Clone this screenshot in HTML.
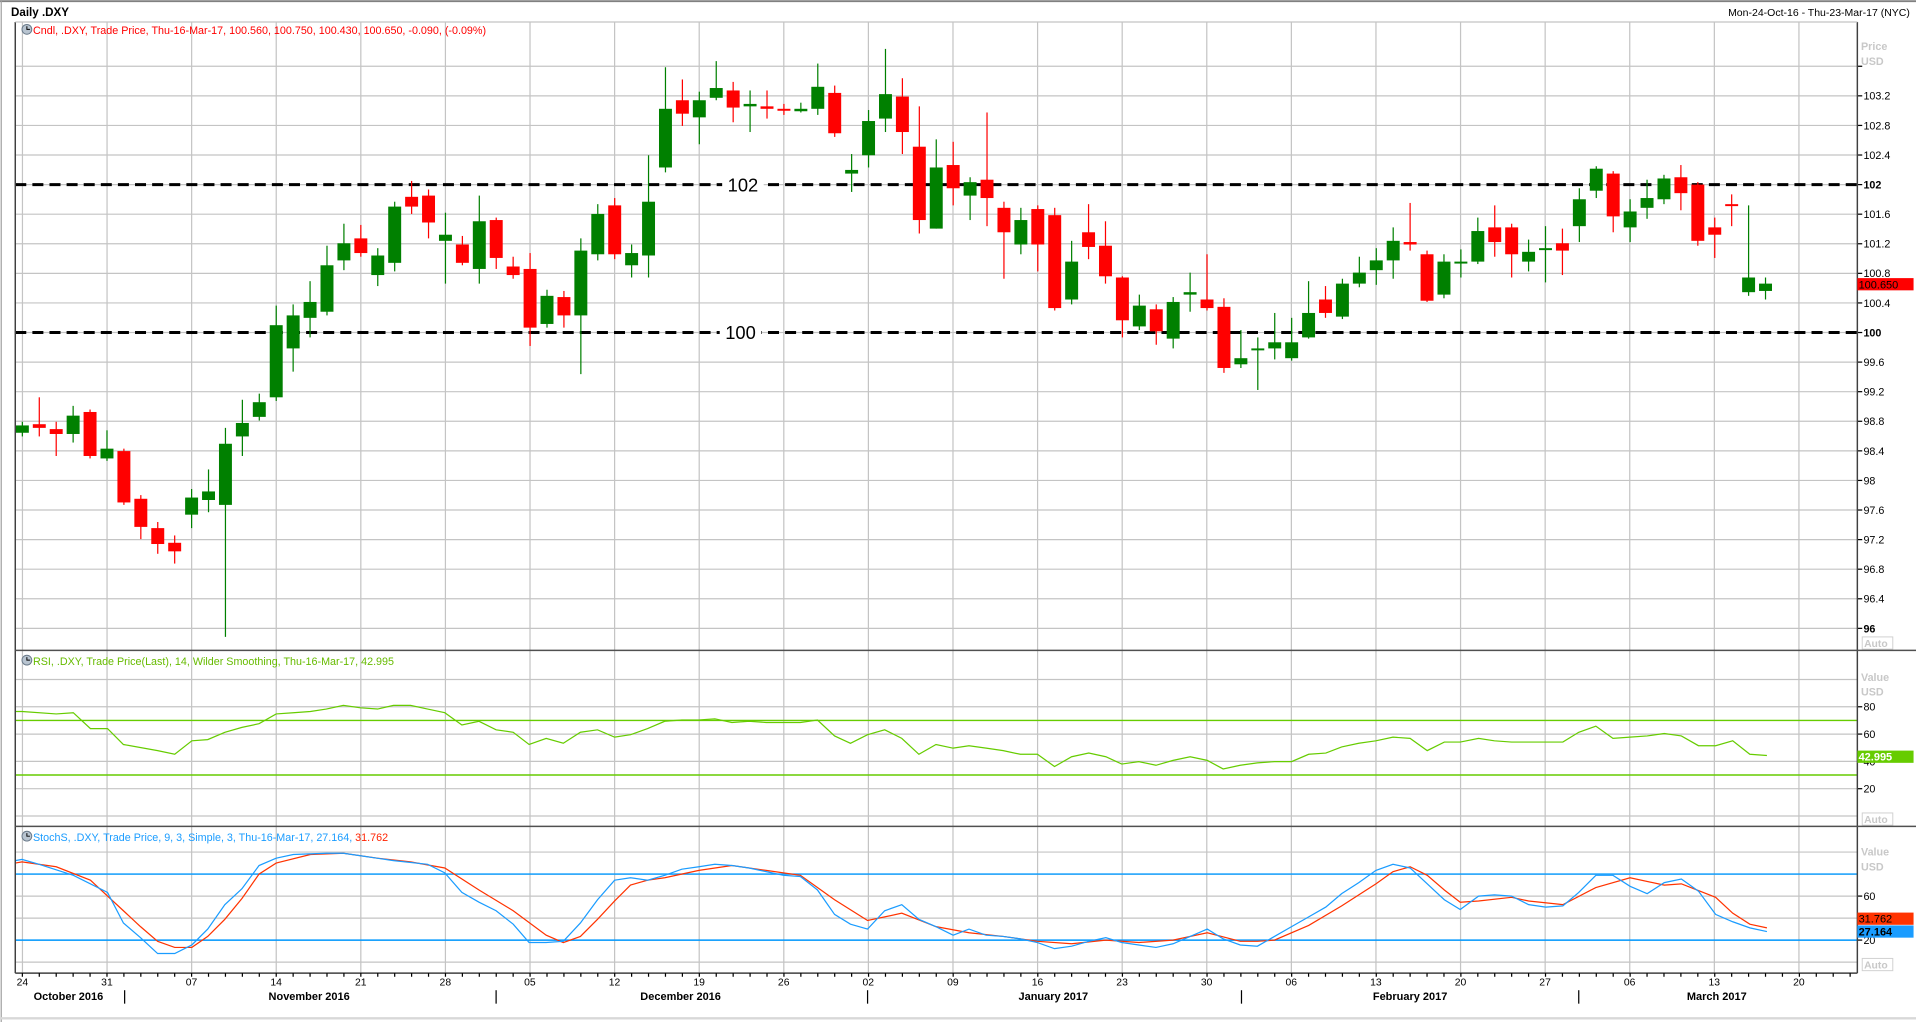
<!DOCTYPE html>
<html><head><meta charset="utf-8"><style>
html,body{margin:0;padding:0;background:#fff;overflow:hidden}
svg{display:block}
text{font-family:"Liberation Sans","DejaVu Sans",sans-serif}
</style></head><body>
<svg id="s" xmlns="http://www.w3.org/2000/svg" width="1916" height="1022" viewBox="0 0 1568 836" preserveAspectRatio="none">
<rect x="0" y="0" width="1568" height="836" fill="#fff"/>
<line x1="0" y1="1" x2="1568" y2="1" stroke="#808080" stroke-width="1.5"/>
<line x1="1" y1="0" x2="1" y2="836" stroke="#a0a0a0"/>
<line x1="0" y1="833" x2="1568" y2="833" stroke="#d8d8d8" stroke-width="2"/>
<text x="9" y="13" font-size="9.5" font-weight="bold" fill="#000">Daily .DXY</text>
<text x="1563" y="13" font-size="8.6" fill="#000" text-anchor="end">Mon-24-Oct-16 - Thu-23-Mar-17 (NYC)</text>
<g id="grid"></g>
<g id="plot"></g>
<g id="frame"></g>
</svg>
<script>
const NS="http://www.w3.org/2000/svg";
function el(p,t,a,txt){const e=document.createElementNS(NS,t);for(const k in a)e.setAttribute(k,a[k]);if(txt!==undefined)e.textContent=txt;p.appendChild(e);return e;}
const G=document.getElementById('grid'),P=document.getElementById('plot'),F=document.getElementById('frame');
const L=12.5,R=1520;
// vertical grid
for(let k=-1;k<=20;k++){const x=87.6+69.23*k;if(x<L||x>R)continue;el(G,'line',{x1:x,y1:18,x2:x,y2:796,stroke:'#c4c4c4','stroke-width':1});}
// price grid
const yp=p=>272-(p-100)*60.5;
for(let p=96;p<=103.61;p+=0.4){const y=yp(p);el(G,'line',{x1:L,y1:y,x2:R,y2:y,stroke:'#c4c4c4'});
 el(F,'line',{x1:R,y1:y,x2:R+4,y2:y,stroke:'#000'});
 const lab=(Math.abs(p-Math.round(p))<0.01)?String(Math.round(p)):p.toFixed(1);
 if(p<103.5) el(F,'text',{x:R+5,y:y+3.2,'font-size':8.8,fill:'#000','font-weight':(lab==='102'||lab==='100'||lab==='96')?'bold':'normal'},lab);}
el(F,'text',{x:1523,y:41,'font-size':8.8,fill:'#c8c8c8','font-weight':'bold'},'Price');
el(F,'text',{x:1523,y:53,'font-size':8.8,fill:'#c8c8c8','font-weight':'bold'},'USD');
// RSI grid
const yr=v=>667.5-1.117*v;
[0,20,40,60,80,100].forEach(v=>{const y=yr(v);el(G,'line',{x1:L,y1:y,x2:R,y2:y,stroke:'#c4c4c4'});if(v>0&&v<100){el(F,'line',{x1:R,y1:y,x2:R+4,y2:y,stroke:'#000'});el(F,'text',{x:R+5,y:y+3.2,'font-size':8.8,fill:'#000'},String(v));}});
el(F,'text',{x:1523,y:557,'font-size':8.8,fill:'#c8c8c8','font-weight':'bold'},'Value');
el(F,'text',{x:1523,y:569,'font-size':8.8,fill:'#c8c8c8','font-weight':'bold'},'USD');
// Stoch grid
const ys=v=>787-0.9*v;
[0,20,40,60,80,100].forEach(v=>{const y=ys(v);el(G,'line',{x1:L,y1:y,x2:R,y2:y,stroke:'#c4c4c4'});if(v===20||v===60){el(F,'line',{x1:R,y1:y,x2:R+4,y2:y,stroke:'#000'});el(F,'text',{x:R+5,y:y+3.2,'font-size':8.8,fill:'#000'},String(v));}});
el(F,'text',{x:1523,y:700,'font-size':8.8,fill:'#c8c8c8','font-weight':'bold'},'Value');
el(F,'text',{x:1523,y:712,'font-size':8.8,fill:'#c8c8c8','font-weight':'bold'},'USD');
// Auto boxes
[[522],[666],[785]].forEach(a=>{el(F,'rect',{x:1524,y:a[0]-1,width:25,height:10,fill:'#fff',stroke:'#d0d0d0','stroke-width':0.8});el(F,'text',{x:1525.5,y:a[0]+7.3,'font-size':8.5,fill:'#c8c8c8','font-weight':'bold'},'Auto');});
// dashed levels
[[102,'102',608],[100,'100',606]].forEach(d=>{const y=yp(d[0]);el(P,'line',{x1:L,y1:y,x2:R,y2:y,stroke:'#000','stroke-width':2.4,'stroke-dasharray':'9 5'});
 el(P,'rect',{x:d[2]-17,y:y-8,width:34,height:16,fill:'#fff'});el(P,'text',{x:d[2],y:y+5.5,'font-size':15,fill:'#000','text-anchor':'middle'},d[1]);});
// candles [bodyTop,bodyBot,wickTop,wickBot,color]
const C=[[348,354,345,357,'g'],[347,350,325,357,'r'],[351,355,345,373,'r'],[340,355,332,362,'g'],[337,373,335,375,'r'],[367,375,352,377,'g'],[369,411,367,413,'r'],[408,431,405,441,'r'],[432,445,427,453,'r'],[444,451,438,461,'r'],
[407,421,400,432,'g'],[402,409,384,419,'g'],[363,413,350,521,'g'],[346,357,327,373,'g'],[329,341,322,344,'g'],[266,325,250,328,'g'],[258,285,249,304,'g'],[247,260,230,276,'g'],[217,255,201,258,'g'],[199,213,183,221,'g'],
[195,207,184,210,'r'],[209,225,203,234,'g'],[169,215,165,222,'g'],[161,169,148,175,'r'],[160,182,155,195,'r'],[192,197,174,232,'g'],[200,215,193,217,'r'],[181,220,160,232,'g'],[180,211,178,220,'r'],[218,225,210,228,'r'],
[220,268,207,283,'r'],[242,265,237,268,'g'],[243,258,238,268,'r'],[205,258,195,306,'g'],[175,208,167,213,'g'],[168,208,162,212,'r'],[207,217,200,227,'g'],[165,209,127,227,'g'],[89,137,55,141,'g'],[82,93,65,103,'r'],
[82,96,75,118,'g'],[72,80,50,82,'g'],[74,88,67,100,'r'],[85,87,74,108,'g'],[87,89,74,97,'r'],[89,90,85,94,'r'],[89,91,84,92,'g'],[71,89,52,94,'g'],[76,109,70,112,'r'],[139,142,126,157,'g'],
[99,127,90,137,'g'],[77,97,40,108,'g'],[79,108,64,126,'r'],[120,180,87,191,'r'],[137,187,114,187,'g'],[135,154,116,168,'r'],[149,160,145,180,'g'],[147,162,92,185,'r'],[170,190,165,228,'r'],[180,200,170,208,'g'],
[171,200,168,222,'r'],[176,252,170,254,'r'],[214,245,197,249,'g'],[190,202,167,212,'r'],[201,226,181,232,'r'],[227,262,226,276,'r'],[250,267,241,270,'g'],[253,271,249,282,'r'],[247,277,243,285,'g'],[239,241,223,255,'g'],
[245,252,208,254,'r'],[251,301,244,305,'r'],[293,298,270,301,'g'],[285,286,276,319,'g'],[280,285,256,294,'g'],[280,293,260,295,'g'],[256,276,230,277,'g'],[245,256,234,260,'r'],[232,259,228,261,'g'],[223,232,210,235,'g'],
[213,221,203,233,'g'],[197,213,186,228,'g'],[198,200,166,205,'r'],[208,246,205,247,'r'],[214,241,208,244,'g'],[214,215,204,227,'g'],[189,214,178,216,'g'],[186,198,168,210,'r'],[186,208,183,227,'r'],[206,214,196,222,'g'],
[203,204,185,231,'g'],[199,205,187,225,'r'],[163,185,154,198,'g'],[138,156,136,162,'g'],[142,177,140,190,'r'],[173,186,163,198,'g'],[162,170,147,179,'g'],[146,163,143,167,'g'],[145,158,135,172,'r'],[151,197,149,201,'r'],
[186,192,178,211,'r'],[167,168,159,185,'r'],[227,239,168,242,'g'],[232,238,227,245,'g']];
C.forEach((c,i)=>{const x=18.3+13.85*i,col=c[4]==='g'?'#008000':'#ff0000';
 el(P,'line',{x1:x,y1:c[2],x2:x,y2:c[3],stroke:col,'stroke-width':1});
 el(P,'rect',{x:x-5.3,y:c[0],width:10.6,height:Math.max(1.6,c[1]-c[0]),fill:col});});
// RSI
el(P,'line',{x1:L,y1:yr(70),x2:R,y2:yr(70),stroke:'#66cc00','stroke-width':1.2});
el(P,'line',{x1:L,y1:yr(30),x2:R,y2:yr(30),stroke:'#66cc00','stroke-width':1.2});
const RS=[[18,582],[46,584],[60,583],[74,596],[88,596],[101,609],[129,614],[143,617],[157,606],[170,605],[184,599],[198,595],[212,592],[226,584],[240,583],[254,582],[267,580],[281,577],[295,579],[309,580],[322,577],[336,577],[350,580],[364,583],[378,593],[392,590],[406,597],[420,599],[433,609],[447,604],[461,608],[475,599],[489,597],[503,603],[516,601],[530,596],[544,590],[558,589],[572,589],[585,588],[599,591],[613,590],[627,591],[641,591],[655,591],[669,589],[683,602],[696,608],[710,601],[724,597],[738,604],[752,617],[766,609],[780,612],[793,610],[807,612],[821,614],[835,617],[849,617],[863,627],[877,619],[891,616],[905,619],[918,625],[932,623],[946,626],[960,622],[974,619],[988,622],[1001,629],[1015,626],[1029,624],[1043,623],[1057,623],[1071,617],[1085,616],[1098,611],[1112,608],[1126,606],[1140,603],[1154,604],[1168,614],[1182,607],[1195,607],[1210,604],[1223,606],[1237,607],[1251,607],[1265,607],[1279,607],[1292,599],[1306,594],[1320,604],[1334,603],[1348,602],[1362,600],[1376,602],[1390,610],[1404,610],[1418,606],[1432,617],[1446,618]];
el(P,'polyline',{points:[[12.5,582]].concat(RS).map(p=>p.join(',')).join(' '),fill:'none',stroke:'#66cc00','stroke-width':1});
// Stoch
el(P,'line',{x1:L,y1:ys(80),x2:R,y2:ys(80),stroke:'#0099ff','stroke-width':1.2});
el(P,'line',{x1:L,y1:ys(20),x2:R,y2:ys(20),stroke:'#0099ff','stroke-width':1.2});
const SB=[[12.5,704],[18,703],[32,707],[60,716],[88,730],[101,755],[115,767],[129,780],[143,780],[157,773],[170,760],[184,740],[198,727],[212,708],[226,702],[240,699],[267,698],[281,698],[295,700],[322,704],[350,707],[364,714],[378,730],[392,738],[406,745],[420,756],[433,771],[447,771],[461,770],[475,755],[489,736],[503,720],[516,718],[530,720],[544,716],[558,711],[572,709],[585,707],[599,708],[613,710],[627,713],[641,716],[655,717],[669,728],[683,748],[696,756],[710,760],[724,745],[738,740],[752,752],[766,758],[780,765],[793,760],[807,765],[821,766],[835,768],[849,771],[863,776],[877,774],[891,770],[905,767],[918,771],[932,773],[946,775],[960,772],[974,766],[988,760],[1001,768],[1015,773],[1029,774],[1043,766],[1057,758],[1071,750],[1085,742],[1098,731],[1112,722],[1126,712],[1140,707],[1154,710],[1168,723],[1182,736],[1195,744],[1210,733],[1223,732],[1237,733],[1251,740],[1265,742],[1279,741],[1292,730],[1306,716],[1320,716],[1334,725],[1348,731],[1362,722],[1376,719],[1390,729],[1404,748],[1418,754],[1432,759],[1446,762]];
const SR=[[12.5,706],[18,705],[46,709],[74,720],[101,745],[115,758],[129,770],[143,775],[157,775],[170,766],[184,752],[198,735],[212,715],[226,706],[254,699],[281,698],[309,702],[336,705],[364,710],[392,728],[420,745],[447,765],[461,771],[475,766],[489,752],[503,737],[516,724],[530,720],[544,718],[572,712],[599,708],[627,712],[655,716],[683,736],[710,753],[738,747],[766,758],[793,763],[821,766],[849,770],[877,772],[905,769],[932,771],[960,769],[988,763],[1015,770],[1029,770],[1043,769],[1071,757],[1098,741],[1126,723],[1140,713],[1154,709],[1168,716],[1182,728],[1195,738],[1210,737],[1237,734],[1251,737],[1279,740],[1306,726],[1334,718],[1362,724],[1376,723],[1404,734],[1418,747],[1432,756],[1446,759]];
el(P,'polyline',{points:SR.map(p=>p.join(',')).join(' '),fill:'none',stroke:'#ff3300','stroke-width':1});
el(P,'polyline',{points:SB.map(p=>p.join(',')).join(' '),fill:'none',stroke:'#1a9cff','stroke-width':1});
// frame lines
el(F,'line',{x1:L,y1:18,x2:L,y2:796,stroke:'#404040','stroke-width':1.2});
el(F,'line',{x1:R,y1:18,x2:R,y2:796,stroke:'#404040','stroke-width':1.2});
el(F,'line',{x1:L,y1:18,x2:R,y2:18,stroke:'#c4c4c4'});
el(F,'line',{x1:L,y1:532,x2:1568,y2:532,stroke:'#505050','stroke-width':1.2});
el(F,'line',{x1:L,y1:676,x2:1568,y2:676,stroke:'#505050','stroke-width':1.2});
el(F,'line',{x1:L,y1:796,x2:R,y2:796,stroke:'#404040','stroke-width':1.2});
// value tags
el(F,'rect',{x:R,y:227.5,width:46,height:10,fill:'#ff0000'});
el(F,'text',{x:R+1,y:235.8,'font-size':9,fill:'#000'},'100.650');
el(F,'rect',{x:R,y:614,width:46,height:10,fill:'#66cc00'});
el(F,'text',{x:R+1,y:622.3,'font-size':9,fill:'#fff','font-weight':'bold'},'42.995');
el(F,'rect',{x:R,y:746.5,width:46,height:10,fill:'#ff3300'});
el(F,'text',{x:R+1,y:754.8,'font-size':9,fill:'#000'},'31.762');
el(F,'rect',{x:R,y:757,width:46,height:10,fill:'#1a9cff'});
el(F,'text',{x:R+1,y:765.3,'font-size':9,fill:'#000','font-weight':'bold'},'27.164');
// headers
function icon(x,y){el(F,'circle',{cx:x,cy:y,r:4,fill:'#b8c4d0',stroke:'#6a7a8a','stroke-width':0.8});el(F,'path',{d:`M${x} ${y-2.5}V${y}H${x+2.5}`,stroke:'#000','stroke-width':0.8,fill:'none'});}
icon(22,24);el(F,'text',{x:27,y:28,'font-size':8.8,fill:'#ff0000'},'Cndl, .DXY, Trade Price, Thu-16-Mar-17, 100.560, 100.750, 100.430, 100.650, -0.090, (-0.09%)');
icon(22,540);el(F,'text',{x:27,y:544,'font-size':8.8,fill:'#66bb00'},'RSI, .DXY, Trade Price(Last),  14, Wilder Smoothing, Thu-16-Mar-17, 42.995');
const st=el(F,'text',{x:27,y:688,'font-size':8.8,fill:'#1a9cff'},'StochS, .DXY, Trade Price,  9, 3, Simple, 3, Thu-16-Mar-17, 27.164, ');
icon(22,684);el(st,'tspan',{fill:'#ff2200'},'31.762');
// bottom axis
for(let i=0;i<110;i++){const x=18.3+13.85*i;if(x>R)break;el(F,'line',{x1:x,y1:796,x2:x,y2:799,stroke:'#000'});}
const D=['24','31','07','14','21','28','05','12','19','26','02','09','16','23','30','06','13','20','27','06','13','20'];
D.forEach((d,k)=>{const x=18.3+69.23*k;el(F,'text',{x:x,y:806,'font-size':8.5,fill:'#000','text-anchor':'middle'},d);});
[['October 2016',56],['November 2016',253],['December 2016',557],['January 2017',862],['February 2017',1154],['March 2017',1405]].forEach(m=>el(F,'text',{x:m[1],y:818,'font-size':9,'font-weight':'bold',fill:'#000','text-anchor':'middle'},m[0]));
[102,406,710,1016,1292].forEach(x=>el(F,'line',{x1:x,y1:810,x2:x,y2:821,stroke:'#000'}));
</script>
</body></html>
